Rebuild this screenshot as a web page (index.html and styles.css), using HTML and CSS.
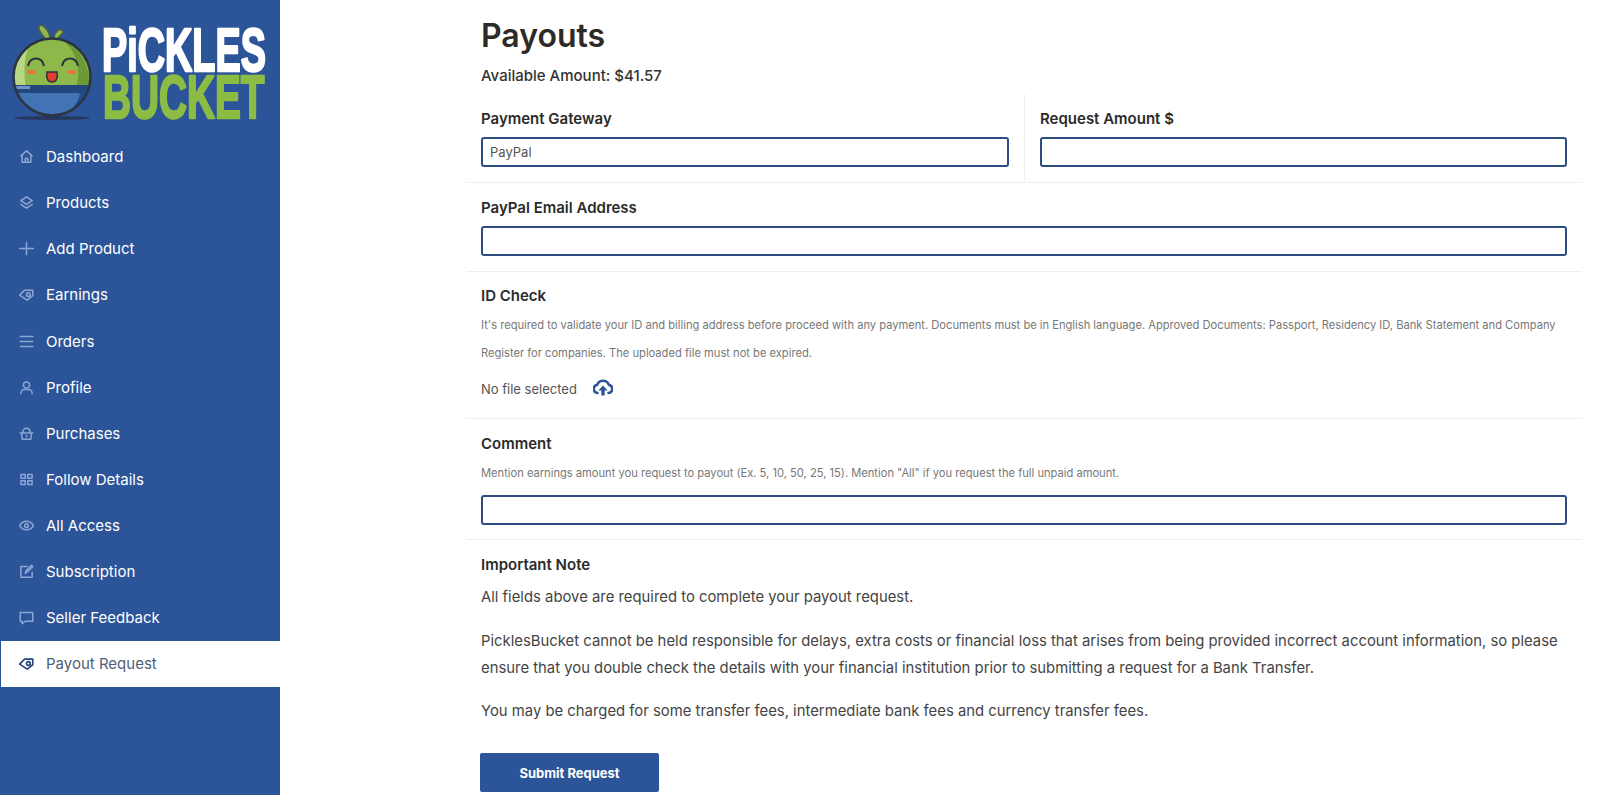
FILE: index.html
```html
<!DOCTYPE html>
<html lang="en">
<head>
<meta charset="utf-8">
<title>Payouts</title>
<link rel="stylesheet" href="styles.css">
</head>
<body>
<div class="app">
  <aside class="sidebar">
    <div class="logo">
      <svg viewBox="0 0 280 130" width="280" height="130">
        <defs><clipPath id="body"><circle cx="52" cy="77" r="38"/></clipPath></defs>
        <ellipse cx="52" cy="118" rx="38" ry="2" fill="#26365c"/>
        <path d="M50 39c0-5-3-10-7-13-3-2-5 0-4 3 1 5 5 6 6 10zM54 39c0-4 1-7 5-9 3-1 5 1 3 4-2 2-4 3-4 5z" fill="#8fb84e" stroke="#4f5f42" stroke-width="1.500"/>
        <g clip-path="url(#body)">
          <rect x="10" y="35" width="84" height="84" fill="#8cb94a"/>
          <path d="M14 88V60c3-10 10-16 18-19-8 12-9 30-6 47z" fill="#b8d686"/>
          <path d="M62 39c12 4 28 20 28 49H76c6-20 0-37-14-49z" fill="#6c9a36"/>
          <rect x="10" y="85" width="84" height="34" fill="#4273b4"/>
          <path d="M80 93h14v26H50c16-3 28-12 30-26z" fill="#1f4c8e"/>
          <rect x="10" y="85" width="84" height="8" fill="#24467f"/>
          <rect x="10" y="86" width="20" height="3" fill="#6f94c8"/>
        </g>
        <circle cx="52" cy="77" r="38.500" fill="none" stroke="#2b3440" stroke-width="2.500"/>
        <path d="M28 66c2-10 14-10 16 0M62 66c2-10 14-10 16 0" fill="none" stroke="#2b3440" stroke-width="2"/>
        <ellipse cx="31.500" cy="72" rx="4.500" ry="2" fill="#f0703a"/>
        <ellipse cx="72" cy="72" rx="4.500" ry="2" fill="#f0703a"/>
        <path d="M47 72h10c1 7-1 10-5 10s-6-3-5-10z" fill="#e63c30" stroke="#2b3440" stroke-width="1.500"/>
        <text class="logo-top" transform="translate(102 71) scale(.61 1)">PiCKLES</text>
        <text class="logo-bottom" transform="translate(103 118) scale(.625 1)">BUCKET</text>
      </svg>
    </div>
    <nav class="nav">
      <a class="nav-item"><svg class="icon" viewBox="0 0 24 24"><path d="M3 11l9-8 9 8M5 10v11h14V10M10 21v-6h4v6"/></svg>Dashboard</a>
      <a class="nav-item"><svg class="icon" viewBox="0 0 24 24"><path d="M12 3l9 6-9 6-9-6z"/><path d="M3 15l9 6 9-6"/></svg>Products</a>
      <a class="nav-item"><svg class="icon" viewBox="0 0 24 24"><path d="M12 2v20M1 12h22"/></svg>Add Product</a>
      <a class="nav-item"><svg class="icon" viewBox="0 0 24 24"><path d="M1 13l8-8h13v9l-9 7z"/><circle cx="15" cy="12" r="3"/></svg>Earnings</a>
      <a class="nav-item"><svg class="icon" viewBox="0 0 24 24"><path d="M2 4h20M2 12h20M2 20h20"/></svg>Orders</a>
      <a class="nav-item"><svg class="icon" viewBox="0 0 24 24"><circle cx="12" cy="8" r="5"/><path d="M3 22v-1a6 6 0 0 1 6-6h6a6 6 0 0 1 6 6v1"/></svg>Profile</a>
      <a class="nav-item"><svg class="icon" viewBox="0 0 24 24"><path d="M2 11h20M4 11l1 10h14l1-10M6 11c0-10 12-10 12 0M12 15v2"/></svg>Purchases</a>
      <a class="nav-item"><svg class="icon" viewBox="0 0 24 24"><path d="M3 4h7v6H3zM14 4h7v6h-7zM3 14h7v6H3zM14 14h7v6h-7z"/></svg>Follow Details</a>
      <a class="nav-item"><svg class="icon" viewBox="0 0 24 24"><path d="M1 12c5-9 17-9 22 0-5 9-17 9-22 0z"/><circle cx="12" cy="12" r="3"/></svg>All Access</a>
      <a class="nav-item"><svg class="icon" viewBox="0 0 24 24"><path d="M21 13v8H3V4h10M10 15l1-4L20 2l2 2-9 9z"/></svg>Subscription</a>
      <a class="nav-item"><svg class="icon" viewBox="0 0 24 24"><path d="M2 4h20v14H10l-5 4v-4H2z"/></svg>Seller Feedback</a>
      <a class="nav-item active"><svg class="icon" viewBox="0 0 24 24"><path d="M1 13l8-8h13v9l-9 7z"/><circle cx="15" cy="12" r="3"/></svg>Payout Request</a>
    </nav>
  </aside>

  <main class="main">
    <div class="heading">
      <h1>Payouts</h1>
      <p class="available">Available Amount: $41.57</p>
    </div>
    <div class="split">
      <div class="row">
        <label class="label">Payment Gateway</label>
        <div class="field">PayPal</div>
      </div>
      <div class="row">
        <label class="label">Request Amount $</label>
        <div class="field"></div>
      </div>
    </div>
    <div class="row">
      <label class="label">PayPal Email Address</label>
      <div class="field"></div>
    </div>
    <div class="row id-row">
      <label class="label">ID Check</label>
      <p class="help">It's required to validate your ID and billing address before proceed with any payment. Documents must be in English language. Approved Documents: Passport, Residency ID, Bank Statement and Company Register for companies. The uploaded file must not be expired.</p>
      <div class="file">
        <span>No file selected</span>
        <svg class="upload" viewBox="0 0 24 24"><path d="M5.500 18a5 5 0 0 1-.5-9.900 7.500 7.500 0 0 1 14 0 5 5 0 0 1-.5 9.900" fill="none" stroke="#2c5499" stroke-width="3" stroke-linecap="round"/><path d="M12 9l5.500 6H14v6h-4v-6H6.500z" fill="#2c5499"/></svg>
      </div>
    </div>
    <div class="row comment-row">
      <label class="label">Comment</label>
      <p class="help">Mention earnings amount you request to payout (Ex. 5, 10, 50, 25, 15). Mention "All" if you request the full unpaid amount.</p>
      <div class="field"></div>
    </div>
    <section class="note">
      <h2 class="label">Important Note</h2>
      <p>All fields above are required to complete your payout request.</p>
      <p>PicklesBucket cannot be held responsible for delays, extra costs or financial loss that arises from being provided incorrect account information, so please ensure that you double check the details with your financial institution prior to submitting a request for a Bank Transfer.</p>
      <p>You may be charged for some transfer fees, intermediate bank fees and currency transfer fees.</p>
    </section>
    <button class="submit">Submit Request</button>
  </main>
</div>
</body>
</html>
```
FILE: styles.css
```css
* { box-sizing: border-box; }
html, body { margin: 0; height: 100%; overflow: hidden; }
body { font-family: Inter, "Liberation Sans", sans-serif; color: #2b2b2b; background: #fff; }

.app { display: flex; height: 795px; }

.sidebar { width: 280px; flex: none; background: #2c5499; }
.logo { height: 133.600px; }
.logo svg { display: block; }
.logo-top, .logo-bottom { font-family: "Liberation Sans", sans-serif; font-weight: 700; font-size: 62px; stroke-width: 2.500px; stroke-linejoin: round; }
.logo-top { fill: #fff; stroke: #fff; }
.logo-bottom { fill: #8cbc43; stroke: #8cbc43; }

.nav { display: flex; flex-direction: column; }
.nav-item { display: flex; align-items: center; gap: 12px; height: 46.100px; padding-left: 19px; color: #fff; font-size: 15px; font-weight: 400; }
.nav-item.active { background: #fff; color: #4f6078; margin-left: 1px; padding-left: 18px; }
.icon { width: 15px; height: 15px; flex: none; fill: none; stroke: #8ba6d4; stroke-width: 2.400; stroke-linejoin: round; stroke-linecap: round; }
.active .icon { stroke: #24457f; stroke-width: 2.600; }

.main { margin-left: 186px; width: 1116px; }
.heading { padding: 15px 0 0 15px; height: 94px; }
h1 { margin: 0; font-size: 32px; line-height: 42px; font-weight: 600; color: #2e2a28; }
.available { margin: 9px 0 0; font-size: 15px; line-height: 20px; font-weight: 500; color: #333; }

.split { display: grid; grid-template-columns: 558px 558px; }
.split .row + .row { border-left: 1px solid #f0f0f0; }
.row { padding: 15px; border-bottom: 1px solid #eee; }
.label { display: block; margin: 0; font-size: 15px; line-height: 20px; font-weight: 600; color: #2b2b2b; }
.field { height: 30px; margin-top: 8px; padding: 0 7px; border: 2px solid #2e4d82; border-radius: 3px; font-size: 13px; line-height: 26px; color: #555; }

.help { margin: 5px 0 0; font-size: 11.150px; line-height: 28px; color: #777; }
.file { display: flex; align-items: center; gap: 16px; margin-top: 9px; height: 26px; font-size: 13px; color: #555; }
.upload { width: 20px; height: 20px; margin-top: -3px; }
.id-row { padding-top: 14px; padding-bottom: 16px; }
.comment-row { padding-bottom: 14px; }
.comment-row .help { margin-top: 5px; }

.note { padding: 15px 15px 0; }
.note p { margin: 9px 0 0; font-size: 14.850px; line-height: 27px; color: #444; }
.note p + p { margin-top: 17px; }
.note p + p + p { margin-top: 16px; }

.submit { display: block; margin: 28px 0 0 14px; width: 179px; height: 39px; border: 0; border-radius: 2px; background: #2c5499; color: #fff; font: 700 13px Inter, "Liberation Sans", sans-serif; }
```
